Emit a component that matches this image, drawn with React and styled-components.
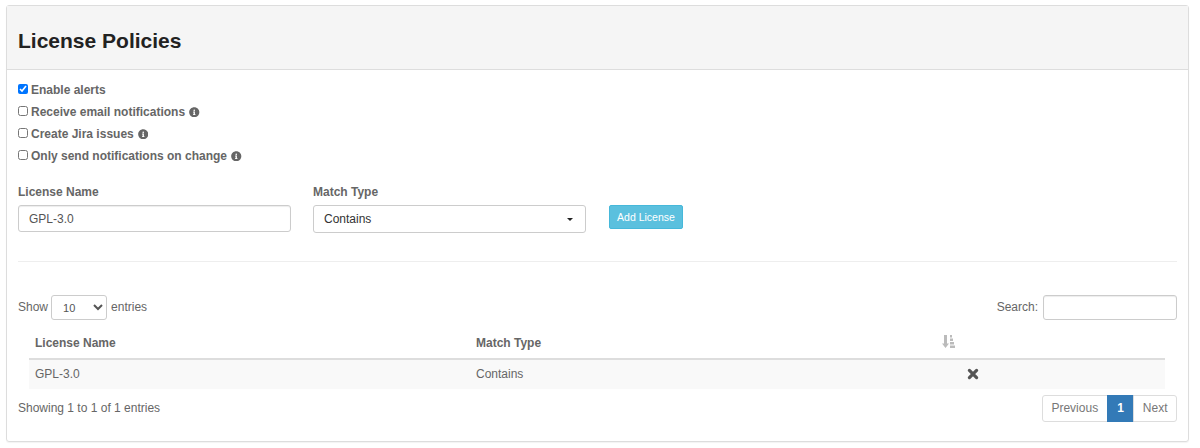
import React from 'react';
import styled, { createGlobalStyle } from 'styled-components';
import { FaInfoCircle } from 'react-icons/fa';

const GlobalStyle = createGlobalStyle`
  html, body {
    margin: 0;
    padding: 0;
    background: #fff;
  }
  body {
    font-family: "Liberation Sans", Arial, sans-serif;
    font-size: 12px;
    line-height: 17px;
    color: #666;
  }
`;

const Page = styled.div`
  width: 1200px;
  height: 448px;
  padding: 5px 11px 0 6px;
  box-sizing: border-box;
  overflow: hidden;
`;

const Panel = styled.section`
  height: 437px;
  box-sizing: border-box;
  border: 1px solid #ddd;
  border-radius: 3px;
  display: flex;
  flex-direction: column;
  box-shadow: 0 1px 1px rgba(0, 0, 0, 0.05);
`;

const PanelHeader = styled.header`
  height: 64px;
  flex: none;
  box-sizing: border-box;
  background: #f5f5f5;
  border-bottom: 1px solid #ddd;
  padding: 0 11px;
  display: flex;
  align-items: center;
`;

const Title = styled.h1`
  margin: 6px 0 0;
  font-size: 21px;
  line-height: 24px;
  font-weight: 700;
  color: #222;
`;

const PanelBody = styled.div`
  flex: 1;
  padding: 12px 11px 0;
  display: flex;
  flex-direction: column;
`;

const Options = styled.div`
  display: flex;
  flex-direction: column;
  gap: 5px;
`;

const CheckRow = styled.label`
  display: flex;
  align-items: center;
  height: 17px;
  font-weight: 700;
  color: #666;
`;

const Check = styled.input`
  width: 10px;
  height: 10px;
  margin: -4px 3px 0 0;
  flex: none;
`;

const Info = styled(FaInfoCircle)`
  width: 10.5px;
  height: 10.5px;
  margin-left: 4px;
  margin-top: -1px;
  color: #666;
`;

const FormRow = styled.div`
  display: flex;
  margin-top: 19px;
`;

const Field = styled.div`
  width: 273px;
  margin-right: 22px;
  display: flex;
  flex-direction: column;
`;

const FieldLabel = styled.label`
  font-weight: 700;
  color: #666;
  margin-bottom: 4px;
`;

const TextInput = styled.input`
  height: 27px;
  box-sizing: border-box;
  border: 1px solid #ccc;
  border-radius: 3px;
  padding: 0 10px;
  font: inherit;
  color: #555;
  outline: none;
  box-shadow: inset 0 1px 1px rgba(0, 0, 0, 0.075);
`;

const SelectButton = styled.button`
  height: 28px;
  box-sizing: border-box;
  border: 1px solid #ccc;
  border-radius: 3px;
  background: #fff;
  padding: 0 10px;
  font: inherit;
  color: #333;
  display: flex;
  align-items: center;
  justify-content: space-between;
`;

const Caret = styled.span`
  width: 0;
  height: 0;
  border-left: 3px solid transparent;
  border-right: 3px solid transparent;
  border-top: 3px solid #222;
  margin-right: 2px;
`;

const AddButton = styled.button`
  align-self: flex-start;
  margin: 21px 0 0 1px;
  height: 24px;
  width: 74px;
  box-sizing: border-box;
  border: 1px solid #46b8da;
  border-radius: 2px;
  background: #5bc0de;
  color: #fff;
  padding: 0;
  font: inherit;
  font-size: 10.5px;
`;

const Divider = styled.hr`
  margin: 28px 0 0;
  border: 0;
  border-top: 1px solid #eee;
`;

const TableTools = styled.div`
  display: flex;
  justify-content: space-between;
  align-items: center;
  margin-top: 33px;
  height: 25px;
`;

const ToolLabel = styled.label`
  display: flex;
  align-items: center;
  color: #666;
`;

const SizeSelect = styled.select`
  width: 56px;
  height: 25px;
  box-sizing: border-box;
  margin: 0 4px 0 3px;
  padding: 0 0 0 7px;
  border: 1px solid #ccc;
  border-radius: 3px;
  background: #fff;
  font: inherit;
  font-size: 11px;
  color: #555;
`;

const SearchInput = styled.input`
  width: 134px;
  height: 25px;
  box-sizing: border-box;
  margin-left: 5px;
  border: 1px solid #ccc;
  border-radius: 3px;
  outline: none;
  box-shadow: inset 0 1px 1px rgba(0, 0, 0, 0.075);
`;

const Table = styled.table`
  width: 1136px;
  margin: 8px 0 0 11px;
  border-collapse: collapse;
  table-layout: fixed;
`;

const Th = styled.th`
  height: 31px;
  padding: 0 6px 0;
  box-sizing: border-box;
  text-align: left;
  font-weight: 700;
  color: #666;
  border-bottom: 2px solid #ddd;
`;

const Td = styled.td`
  height: 30px;
  padding: 0 6px;
  box-sizing: border-box;
  background: #f9f9f9;
  color: #666;
`;

const SortIcon = styled.svg`
  width: 13px;
  height: 13px;
  display: block;
  color: #bbb;
  margin-top: -3px;
`;

const RemoveIcon = styled.svg`
  width: 12px;
  height: 12px;
  color: #555;
  display: block;
  margin: -1px 0 0 25px;
`;

const TableFooter = styled.div`
  display: flex;
  justify-content: space-between;
  align-items: flex-start;
  margin-top: 6px;
`;

const Summary = styled.div`
  margin-top: 5px;
  color: #666;
`;

const Pager = styled.nav`
  display: flex;
  height: 27px;
`;

const PageLink = styled.a`
  box-sizing: border-box;
  height: 27px;
  display: flex;
  align-items: center;
  padding: 0 ${(p) => (p.$active ? '9.5px' : '8.5px')};
  border: 1px solid ${(p) => (p.$active ? '#337ab7' : '#ddd')};
  margin-left: -1px;
  background: ${(p) => (p.$active ? '#337ab7' : '#fff')};
  color: ${(p) => (p.$active ? '#fff' : '#777')};
  font-weight: ${(p) => (p.$active ? 700 : 400)};
  &:first-child {
    border-radius: 3px 0 0 3px;
  }
  &:last-child {
    border-radius: 0 3px 3px 0;
  }
`;

const options = [
  { label: 'Enable alerts', checked: true },
  { label: 'Receive email notifications', info: true },
  { label: 'Create Jira issues', info: true },
  { label: 'Only send notifications on change', info: true },
];

export default function App() {
  return (
    <Page>
      <GlobalStyle />
      <Panel>
        <PanelHeader>
          <Title>License Policies</Title>
        </PanelHeader>
        <PanelBody>
          <Options>
            {options.map((o) => (
              <CheckRow key={o.label}>
                <Check type="checkbox" defaultChecked={o.checked} />
                {o.label}
                {o.info && <Info />}
              </CheckRow>
            ))}
          </Options>

          <FormRow>
            <Field>
              <FieldLabel>License Name</FieldLabel>
              <TextInput defaultValue="GPL-3.0" />
            </Field>
            <Field>
              <FieldLabel>Match Type</FieldLabel>
              <SelectButton type="button">
                Contains
                <Caret />
              </SelectButton>
            </Field>
            <AddButton type="button">Add License</AddButton>
          </FormRow>

          <Divider />

          <TableTools>
            <ToolLabel>
              Show
              <SizeSelect defaultValue="10">
                <option>10</option>
                <option>25</option>
                <option>50</option>
                <option>100</option>
              </SizeSelect>
              entries
            </ToolLabel>
            <ToolLabel>
              Search:
              <SearchInput />
            </ToolLabel>
          </TableTools>

          <Table>
            <colgroup>
              <col style={{ width: 441 }} />
              <col style={{ width: 466 }} />
              <col />
            </colgroup>
            <thead>
              <tr>
                <Th>License Name</Th>
                <Th>Match Type</Th>
                <Th>
                  <SortIcon viewBox="0 0 13 13" fill="currentColor">
                    <path d="M2 0h3v8.5h2L3.5 13 0 8.5h2z" />
                    <path d="M8 0h2v2.5H8zM8 3.5h3V6H8zM8 7h4v2.5H8zM8 10.5h5V13H8z" />
                  </SortIcon>
                </Th>
              </tr>
            </thead>
            <tbody>
              <tr>
                <Td>GPL-3.0</Td>
                <Td>Contains</Td>
                <Td>
                  <RemoveIcon viewBox="0 0 12 12" fill="none" stroke="currentColor" strokeWidth="3.2" strokeLinecap="round">
                    <path d="M2.4 2.4l7.2 7.2M9.6 2.4l-7.2 7.2" />
                  </RemoveIcon>
                </Td>
              </tr>
            </tbody>
          </Table>

          <TableFooter>
            <Summary>Showing 1 to 1 of 1 entries</Summary>
            <Pager>
              <PageLink>Previous</PageLink>
              <PageLink $active>1</PageLink>
              <PageLink>Next</PageLink>
            </Pager>
          </TableFooter>
        </PanelBody>
      </Panel>
    </Page>
  );
}
